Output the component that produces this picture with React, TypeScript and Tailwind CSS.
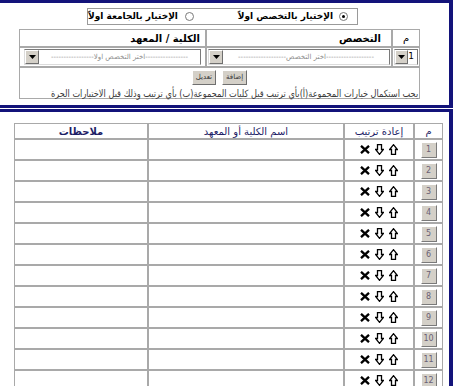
import React from "react";

const rows = [1, 2, 3, 4, 5, 6, 7, 8, 9, 10, 11, 12];

const Radio = ({ checked }: { checked?: boolean }) => (
  <span className="flex h-[9px] w-[9px] shrink-0 items-center justify-center rounded-full border border-[#7a7a7a] bg-white">
    {checked && <span className="h-[3px] w-[3px] rounded-full bg-black" />}
  </span>
);

const Arrow = () => (
  <span className="flex w-[14px] items-center justify-center border border-t-white border-l-white border-b-[#6f6f6f] border-r-[#6f6f6f] bg-[#d4d0c8]">
    <svg width="7" height="4" viewBox="0 0 7 4">
      <polygon points="0,0 7,0 3.5,4" fill="#000" />
    </svg>
  </span>
);

const FakeSelect = ({ text, className }: { text: string; className: string }) => (
  <div
    dir="rtl"
    className={`flex h-[16px] border border-t-[#7a7a7a] border-r-[#7a7a7a] border-b-[#dcdcdc] border-l-[#dcdcdc] bg-white ${className}`}
  >
    <span className="flex flex-1 items-center justify-center overflow-hidden whitespace-nowrap text-[7px] text-[#8c8c8c]">
      {text}
    </span>
    <Arrow />
  </div>
);

const SmallButton = ({ label }: { label: string }) => (
  <span className="flex h-[15px] items-center border border-t-white border-l-white border-b-[#6f6f6f] border-r-[#6f6f6f] bg-[#d4d0c8] px-[3px] text-[7px] text-[#333]">
    {label}
  </span>
);

const CrossIcon = () => (
  <svg width="10" height="9" viewBox="0 0 10 9">
    <path d="M1 0.8 L9 8.2 M9 0.8 L1 8.2" stroke="#000" strokeWidth="2.3" />
  </svg>
);

const DownIcon = () => (
  <svg width="9" height="11" viewBox="0 0 9 11">
    <polygon
      points="2.5,0.6 6.5,0.6 6.5,5.5 8.4,5.5 4.5,10.3 0.6,5.5 2.5,5.5"
      fill="#fff"
      stroke="#000"
      strokeWidth="1.3"
    />
  </svg>
);

const UpIcon = () => (
  <svg width="9" height="11" viewBox="0 0 9 11">
    <polygon
      points="2.5,10.4 6.5,10.4 6.5,5.5 8.4,5.5 4.5,0.7 0.6,5.5 2.5,5.5"
      fill="#fff"
      stroke="#000"
      strokeWidth="1.3"
    />
  </svg>
);

const cell = "border border-[#a9a9a9]";

export default function App() {
  return (
    <div className="relative h-[386px] w-[453px] overflow-hidden bg-white font-['DejaVu_Sans',sans-serif]">
      {/* upper frame */}
      <div className="h-[108px] border-t-[3px] border-r-4 border-b-[3px] border-[#13137a]">
        <div
          dir="rtl"
          className="ml-[87px] mt-[5px] flex h-[17px] w-[271px] items-center whitespace-nowrap border border-[#9a9a9a] pr-[9px] text-[9px] leading-none font-bold text-black"
        >
          <Radio checked />
          <span className="mr-[6px] w-[100px]">الإختيار بالتخصص اولاً</span>
          <span className="w-[50px]" />
          <Radio />
          <span className="mr-[7px]">الإختيار بالجامعة اولاً</span>
        </div>

        <div
          dir="rtl"
          className="ml-[19px] mt-[4px] grid w-[401px] grid-cols-[28px_186px_187px] grid-rows-[18px_20px_32px]"
        >
          <div className={`${cell} flex items-center justify-center text-[10px]`}>م</div>
          <div className={`${cell} flex items-center pr-[10px] text-[10px] font-bold`}>التخصص</div>
          <div className={`${cell} flex items-center pr-[5px] text-[10px] font-bold`}>الكلية / المعهد</div>

          <div className={`${cell} flex items-center px-[1px]`}>
            <div className="flex h-[16px] w-full border border-t-[#7a7a7a] border-r-[#7a7a7a] border-b-[#dcdcdc] border-l-[#dcdcdc] bg-white">
              <span className="flex flex-1 items-center pr-[3px] text-[9px]">1</span>
              <Arrow />
            </div>
          </div>
          <div className={`${cell} flex items-center px-[1px]`}>
            <FakeSelect className="w-full" text="-------------------اختر التخصص-------------------" />
          </div>
          <div className={`${cell} flex items-center px-[4px]`}>
            <FakeSelect className="w-full" text="-----------------اختر التخصص اولا-----------------" />
          </div>

          <div className={`${cell} col-span-3 flex flex-col items-center pt-[2px]`}>
            <div className="flex gap-[6px]">
              <SmallButton label="إضافة" />
              <SmallButton label="تعديل" />
            </div>
            <div className="mt-[1px] w-full origin-right scale-x-[0.82] whitespace-nowrap pr-[1px] text-[10px] text-[#3a3a3a]">
              يجب استكمال خيارات المجموعة(أ)بأي ترتيب قبل كليات المجموعة(ب) بأي ترتيب وذلك قبل الاختيارات الحرة
            </div>
          </div>
        </div>
      </div>

      {/* lower frame */}
      <div className="mt-[1px] h-[277px] border-t-[3px] border-r-4 border-[#13137a]">
        <div
          dir="rtl"
          className="ml-[14px] mt-[11px] grid w-[429px] grid-cols-[29px_70px_196px_134px] grid-rows-[16px_repeat(12,21px)] text-[10px] text-[#1d1d66]"
        >
          <div className={`${cell} flex items-center justify-center`}>م</div>
          <div className={`${cell} flex items-center justify-center`}>إعادة ترتيب</div>
          <div className={`${cell} flex items-center justify-center`}>اسم الكلية أو المعهد</div>
          <div className={`${cell} flex items-center justify-center font-bold`}>ملاحظات</div>

          {rows.map((n) => (
            <React.Fragment key={n}>
              <div className={`${cell} flex items-center justify-center`}>
                <span className="flex h-[16px] w-[16px] items-center justify-center border border-t-white border-l-white border-b-[#7a7a7a] border-r-[#7a7a7a] bg-[#d4d0c8] text-[8px] text-[#6a5f74]">
                  {n}
                </span>
              </div>
              <div className={`${cell} flex items-center justify-center gap-[5px]`}>
                <UpIcon />
                <DownIcon />
                <CrossIcon />
              </div>
              <div className={cell} />
              <div className={cell} />
            </React.Fragment>
          ))}
        </div>
      </div>
    </div>
  );
}
